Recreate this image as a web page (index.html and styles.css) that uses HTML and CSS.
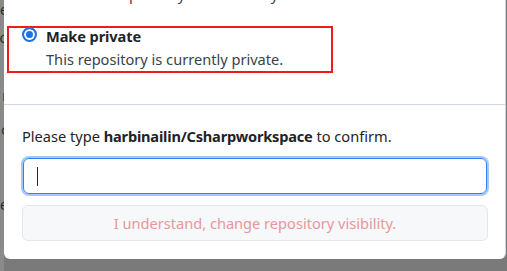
FILE: index.html
```html
<!DOCTYPE html>
<html lang="en">
<head>
  <meta charset="UTF-8" />
  <meta name="viewport" content="width=device-width, initial-scale=1.0" />
  <title>Change repository visibility</title>
  <link rel="stylesheet" href="styles.css">
</head>
<body>
  <div class="screen">
    <div class="behind">
      <p class="ghost g1">e</p>
      <p class="ghost g2">o</p>
      <p class="ghost g3">r</p>
      <p class="ghost g5">c</p>
      <p class="ghost g6">e</p>
    </div>

    <div class="dialog">
      <div class="options">
        <p class="opt-desc cut">Make this repository visible to anyone.</p>

        <div class="highlight">
          <div class="option">
            <span class="radio checked"></span>
            <div>
              <div class="opt-title">Make private</div>
              <p class="opt-desc">This repository is currently private.</p>
            </div>
          </div>
        </div>
      </div>

      <div class="confirm">
        <p class="prompt">Please type <strong>harbinailin/Csharpworkspace</strong> to confirm.</p>
        <div class="field focused"><span class="caret"></span></div>
        <button class="btn-danger" disabled>I understand, change repository visibility.</button>
      </div>
    </div>
  </div>
</body>
</html>
```

FILE: styles.css
```css
body {
  margin: 0;
  background: #7a7a7a;
  font-family: "Noto Sans", "Open Sans", sans-serif;
  font-size: 14.6px;
  color: #1f2328;
  overflow: hidden;
}
p {
  margin: 0;
}
.screen {
  display: flex;
  height: 271px;
}
.behind {
  width: 4px;
  flex: none;
  overflow: hidden;
  background: #8a8a8a;
  display: flex;
  flex-direction: column;
  align-items: flex-end;
}
.ghost {
  color: #2b2b2b;
  font-size: 14px;
  line-height: 14px;
  margin-right: -4px;
}
.g1 { margin-top: 3px; }
.g2 { margin-top: 14px; }
.g3 { margin-top: 44px; }
.g5 { margin-top: 20px; }
.g6 { margin-top: 61px; }

.dialog {
  width: 501px;
  height: 259px;
  background: #fff;
  border-radius: 0 0 6px 6px;
  border-right: 1px solid #d0d7de;
  overflow: hidden;
}

.options {
  display: flow-root;
  height: 104px;
  border-bottom: 1px solid #d0d7de;
}
.opt-desc {
  color: #3b424a;
  line-height: 18px;
}
.cut {
  margin-top: -15px;
  padding-left: 41px;
}
.highlight {
  margin: 23px 0 0 3px;
  width: 322px;
  height: 43px;
  border: 2px solid #f21a1a;
}
.option {
  display: flex;
  align-items: flex-start;
  gap: 9px;
  padding-left: 13px;
}
.radio {
  width: 15px;
  height: 15px;
  margin-top: -1px;
  border-radius: 50%;
  box-sizing: border-box;
  flex: none;
}
.radio.checked {
  border: 2px solid #1a73e8;
  background: #1a73e8;
  box-shadow: inset 0 0 0 2px #fff;
}
.opt-title {
  font-weight: 700;
  line-height: 16px;
  letter-spacing: -0.1px;
}
.option .opt-desc {
  margin-top: 6px;
}

.confirm {
  padding: 21px 17px 0 18px;
}
.prompt {
  line-height: 20px;
}
.prompt strong {
  font-weight: 700;
  letter-spacing: -0.2px;
}
.field {
  margin: 12px 1px 0;
  height: 34px;
  border: 1px solid #2f81f7;
  border-radius: 6px;
  box-shadow: 0 0 0 2px #a6c8f7;
  display: flex;
  align-items: center;
  padding-left: 13px;
}
.caret {
  width: 1px;
  height: 19px;
  background: #24292f;
}
.btn-danger {
  display: block;
  width: 100%;
  margin-top: 11px;
  height: 36px;
  border: 1px solid #e4e7ea;
  border-radius: 6px;
  background: #f6f8fa;
  color: #e8979b;
  font-family: inherit;
  font-size: 14.6px;
}
```
